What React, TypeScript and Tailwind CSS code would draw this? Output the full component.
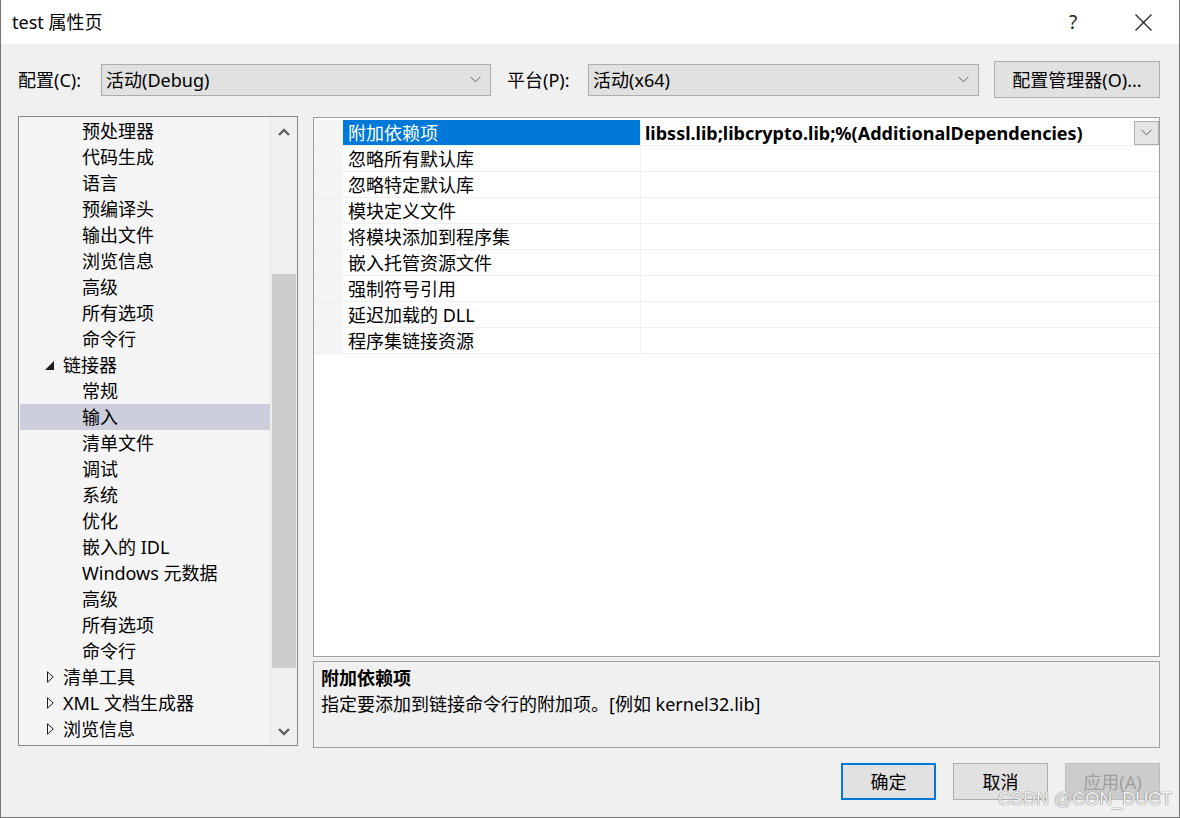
import React from 'react'

const FONT = '"Segoe UI", "Noto Sans", "Noto Sans CJK SC", sans-serif'

type TreeItem = { label: string; level: 1 | 2; state?: 'open' | 'closed'; selected?: boolean }

const TREE: TreeItem[] = [
  { label: '预处理器', level: 2 },
  { label: '代码生成', level: 2 },
  { label: '语言', level: 2 },
  { label: '预编译头', level: 2 },
  { label: '输出文件', level: 2 },
  { label: '浏览信息', level: 2 },
  { label: '高级', level: 2 },
  { label: '所有选项', level: 2 },
  { label: '命令行', level: 2 },
  { label: '链接器', level: 1, state: 'open' },
  { label: '常规', level: 2 },
  { label: '输入', level: 2, selected: true },
  { label: '清单文件', level: 2 },
  { label: '调试', level: 2 },
  { label: '系统', level: 2 },
  { label: '优化', level: 2 },
  { label: '嵌入的 IDL', level: 2 },
  { label: 'Windows 元数据', level: 2 },
  { label: '高级', level: 2 },
  { label: '所有选项', level: 2 },
  { label: '命令行', level: 2 },
  { label: '清单工具', level: 1, state: 'closed' },
  { label: 'XML 文档生成器', level: 1, state: 'closed' },
  { label: '浏览信息', level: 1, state: 'closed' },
]

const PROPS = [
  '附加依赖项',
  '忽略所有默认库',
  '忽略特定默认库',
  '模块定义文件',
  '将模块添加到程序集',
  '嵌入托管资源文件',
  '强制符号引用',
  '延迟加载的 DLL',
  '程序集链接资源',
]

function Chevron({ className = '' }: { className?: string }) {
  return (
    <svg width="11" height="7" viewBox="0 0 11 7" className={className}>
      <path d="M0.5 0.8 L5.5 5.8 L10.5 0.8" fill="none" stroke="#606060" strokeWidth="1" />
    </svg>
  )
}

function Combo({ value, width }: { value: string; width: string }) {
  return (
    <div className={`${width} h-[32px] flex items-center justify-between border border-[#adadad] bg-[#e1e1e1] pl-[4px] pr-[9px]`}>
      <span className="pt-[1px]">{value}</span>
      <Chevron />
    </div>
  )
}

function TreeRow({ item }: { item: TreeItem }) {
  return (
    <div className={`h-[26px] flex items-center ${item.selected ? 'bg-[#cccedb]' : ''}`}>
      {item.level === 1 ? (
        <>
          <span className="w-[43px] flex justify-end pr-[9px]">
            {item.state === 'open' ? (
              <svg width="9" height="9" viewBox="0 0 9 9">
                <path d="M9 0 L9 9 L0 9 Z" fill="#1e1e1e" />
              </svg>
            ) : (
              <svg width="7" height="12" viewBox="0 0 7 12">
                <path d="M0.5 0.8 L6.2 6 L0.5 11.2 Z" fill="none" stroke="#1e1e1e" strokeWidth="1" />
              </svg>
            )}
          </span>
          <span>{item.label}</span>
        </>
      ) : (
        <span className="pl-[62px]">{item.label}</span>
      )}
    </div>
  )
}

export default function App() {
  return (
    <div
      className="relative w-[1180px] h-[818px] bg-[#f0f0f0] border-x border-b border-[#767676] flex flex-col text-[18px] text-[#000] leading-none"
      style={{ fontFamily: FONT }}
    >
      {/* title bar */}
      <div className="h-[44px] bg-white flex items-center pl-[11px]">
        <span className="flex-1 pb-[1px]">test 属性页</span>
        <span className="w-[70px] text-center text-[19px] text-[#222] pr-[2px]">?</span>
        <span className="w-[70px] flex justify-center pr-[2px]">
          <svg width="17" height="17" viewBox="0 0 17 17">
            <path d="M0.5 0.5 L16.5 16.5 M16.5 0.5 L0.5 16.5" stroke="#222" strokeWidth="1.2" />
          </svg>
        </span>
      </div>

      {/* config row */}
      <div className="flex items-center pl-[17px] pr-[19px] mt-[17px] h-[37px]">
        <span className="w-[83px] pt-[1px]">配置(C):</span>
        <Combo value="活动(Debug)" width="w-[390px]" />
        <span className="w-[97px] pl-[16px] pt-[1px]">平台(P):</span>
        <Combo value="活动(x64)" width="w-[391px]" />
        <div className="ml-auto w-[166px] h-[37px] border border-[#adadad] bg-[#e1e1e1] flex items-center justify-center">
          配置管理器(O)...
        </div>
      </div>

      {/* main area */}
      <div className="flex mt-[18px] pl-[17px] pr-[19px]">
        {/* tree */}
        <div className="w-[280px] h-[630px] border border-[#828790] bg-[#f5f5f5] flex">
          <div className="flex-1 pt-[1px] pl-[1px]">
            {TREE.map((t, i) => (
              <TreeRow key={i} item={t} />
            ))}
          </div>
          <div className="w-[27px] bg-[#f0f0f0] border-l border-[#e8e8e8] flex flex-col items-center">
            <div className="h-[30px] flex items-center justify-center">
              <svg width="12" height="8" viewBox="0 0 12 8">
                <path d="M1 7 L6 2 L11 7" fill="none" stroke="#606060" strokeWidth="2.4" />
              </svg>
            </div>
            <div className="mt-[127px] w-[24px] h-[394px] bg-[#cdcdcd]" />
            <div className="flex-1 flex items-end justify-center pb-[9px]">
              <svg width="12" height="8" viewBox="0 0 12 8">
                <path d="M1 1 L6 6 L11 1" fill="none" stroke="#606060" strokeWidth="2.4" />
              </svg>
            </div>
          </div>
        </div>

        {/* right column */}
        <div className="ml-[15px] flex-1 flex flex-col gap-[4px]">
          <div className="h-[540px] border border-[#a0a0a0] bg-white flex flex-col pt-[2px] mt-[1px]">
            {PROPS.map((p, i) => (
              <div key={p} className="h-[26px] flex border-b border-[#f0f0f0]">
                <div className="w-[29px] bg-[#f5f5f5]" />
                <div
                  className={`w-[298px] flex items-center pl-[5px] border-r border-[#f0f0f0] ${
                    i === 0 ? 'bg-[#0078d7] text-white' : ''
                  }`}
                >
                  {p}
                </div>
                <div className="flex-1 flex items-center pl-[4px]">
                  {i === 0 && (
                    <>
                      <span className="flex-1 font-bold">libssl.lib;libcrypto.lib;%(AdditionalDependencies)</span>
                      <div className="w-[25px] h-[24px] border border-[#adadad] bg-[#e5e5e5] flex items-center justify-center">
                        <Chevron />
                      </div>
                    </>
                  )}
                </div>
              </div>
            ))}
          </div>
          <div className="h-[87px] border border-[#a0a0a0] bg-[#f0f0f0] pl-[7px] pt-[7px]">
            <div className="font-bold h-[18px] flex items-center">附加依赖项</div>
            <div className="mt-[8px]">指定要添加到链接命令行的附加项。[例如 kernel32.lib]</div>
          </div>
        </div>
      </div>

      {/* buttons */}
      <div className="flex justify-end gap-[17px] pr-[19px] mt-[15px]">
        <div className="w-[95px] h-[37px] border-2 border-[#0078d7] bg-[#e1e1e1] flex items-center justify-center">
          确定
        </div>
        <div className="w-[95px] h-[37px] border border-[#adadad] bg-[#e1e1e1] flex items-center justify-center">
          取消
        </div>
        <div className="w-[95px] h-[37px] border border-[#bfbfbf] bg-[#cccccc] text-[#a0a0a0] flex items-center justify-center">
          应用(A)
        </div>
      </div>

      {/* watermark */}
      <div
        className="absolute left-[997px] top-[790px] text-[18px] text-[#f4f4f4] [text-shadow:0_0_1px_#777,0_0_1px_#777]"
        style={{ fontFamily: '"Liberation Sans", Arial, sans-serif' }}
      >
        CSDN @CON_DUCT
      </div>
    </div>
  )
}
